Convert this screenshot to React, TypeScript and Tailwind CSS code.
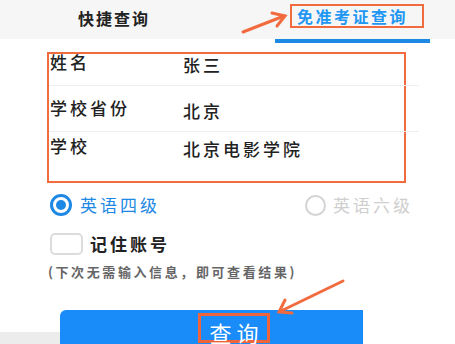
import React from "react";

const F = { fontFamily: '"Noto Sans CJK SC", "Noto Sans", sans-serif' };

export default function App() {
  return (
    <div
      className="relative w-[455px] h-[344px] overflow-hidden bg-white flex flex-col"
      style={F}
    >
      {/* Header tabs */}
      <div className="h-[39px] bg-[#f6f6f6] flex items-start shrink-0">
        <div className="ml-[78px] mt-[8px] text-[16px] leading-[20px] font-bold tracking-[2px] text-[#222]">
          快捷查询
        </div>
        <div className="ml-[140px] mt-[4px] w-[134px] h-[24px] border-2 border-[#f26b3f] flex items-center pl-[5px] text-[16px] font-bold tracking-[2.5px] text-[#2196f3]">
          免准考证查询
        </div>
      </div>
      <div className="h-[4px] shrink-0 flex">
        <div className="ml-[275px] w-[155px] h-[4px] bg-[#1e88e5]" />
      </div>

      {/* Form box */}
      <div className="ml-[47px] mt-[9px] w-[359px] h-[131px] border-2 border-[#f26b3f] shrink-0 overflow-visible">
        <div className="w-[370px] h-[32px] border-b border-[#eeeeee] flex items-start text-[17px] font-medium text-[#222] tracking-[3px]">
          <div className="w-[134px] pl-[1px] -mt-[4px] leading-[24px]">姓名</div>
          <div className="-mt-[1px] leading-[24px]">张三</div>
        </div>
        <div className="w-[370px] h-[46px] border-b border-[#eeeeee] flex items-start text-[17px] font-medium text-[#222] tracking-[3px]">
          <div className="w-[134px] pl-[1px] mt-[10px] leading-[24px]">学校省份</div>
          <div className="mt-[13px] leading-[24px]">北京</div>
        </div>
        <div className="w-[370px] h-[49px] flex items-start text-[17px] font-medium text-[#222] tracking-[3px]">
          <div className="w-[134px] pl-[1px] mt-[2px] leading-[24px]">学校</div>
          <div className="mt-[5px] leading-[24px]">北京电影学院</div>
        </div>
      </div>

      {/* Radios */}
      <div className="mt-[11px] h-[22px] flex items-center shrink-0">
        <div className="ml-[50px] w-[22px] h-[22px] rounded-full border-[3px] border-[#1e88e5] flex items-center justify-center">
          <div className="w-[10px] h-[10px] rounded-full bg-[#1e88e5]" />
        </div>
        <div className="ml-[8px] text-[17px] leading-[22px] tracking-[3px] text-[#1e88e5]">英语四级</div>
        <div className="ml-[145px] w-[21px] h-[21px] rounded-full border-2 border-[#d4d4d4]" />
        <div className="ml-[7px] text-[17px] leading-[22px] tracking-[3px] text-[#cfcfcf]">英语六级</div>
      </div>

      {/* Remember */}
      <div className="mt-[17px] h-[22px] flex items-center shrink-0">
        <div className="ml-[50px] w-[33px] h-[22px] rounded-[5px] border-2 border-[#dcdcdc]" />
        <div className="ml-[7px] text-[17px] leading-[22px] font-bold tracking-[3px] text-[#222]">记住账号</div>
      </div>

      <div className="mt-[9px] ml-[48px] h-[16px] text-[13px] leading-[16px] tracking-[2.6px] text-[#666] font-bold shrink-0">
        (下次无需输入信息，即可查看结果)
      </div>

      {/* Button */}
      <div className="mt-[30px] flex items-end flex-1">
        <div className="w-[60px] h-[12px] bg-[#ececec]" />
        <div className="w-[303px] h-full bg-[#1a8cfa] rounded-tl-[6px] flex justify-start">
          <div className="ml-[138px] mt-[3px] w-[72px] h-[30px] border-[3px] border-[#f0643c] flex items-start justify-center text-white text-[22px] leading-[32px] tracking-[5px] pl-[5px]">
            查询
          </div>
        </div>
      </div>

      {/* Annotation arrows */}
      <svg className="absolute left-0 top-0 pointer-events-none" width="455" height="344">
        <g stroke="#f26b3f" strokeWidth="3" fill="none" strokeLinecap="round">
          <line x1="243" y1="32" x2="284" y2="16" />
          <polyline points="272,13 285,16 277,26" />
          <line x1="343" y1="281" x2="281" y2="311" />
          <polyline points="285,300 279,312 292,313" />
        </g>
      </svg>
    </div>
  );
}
